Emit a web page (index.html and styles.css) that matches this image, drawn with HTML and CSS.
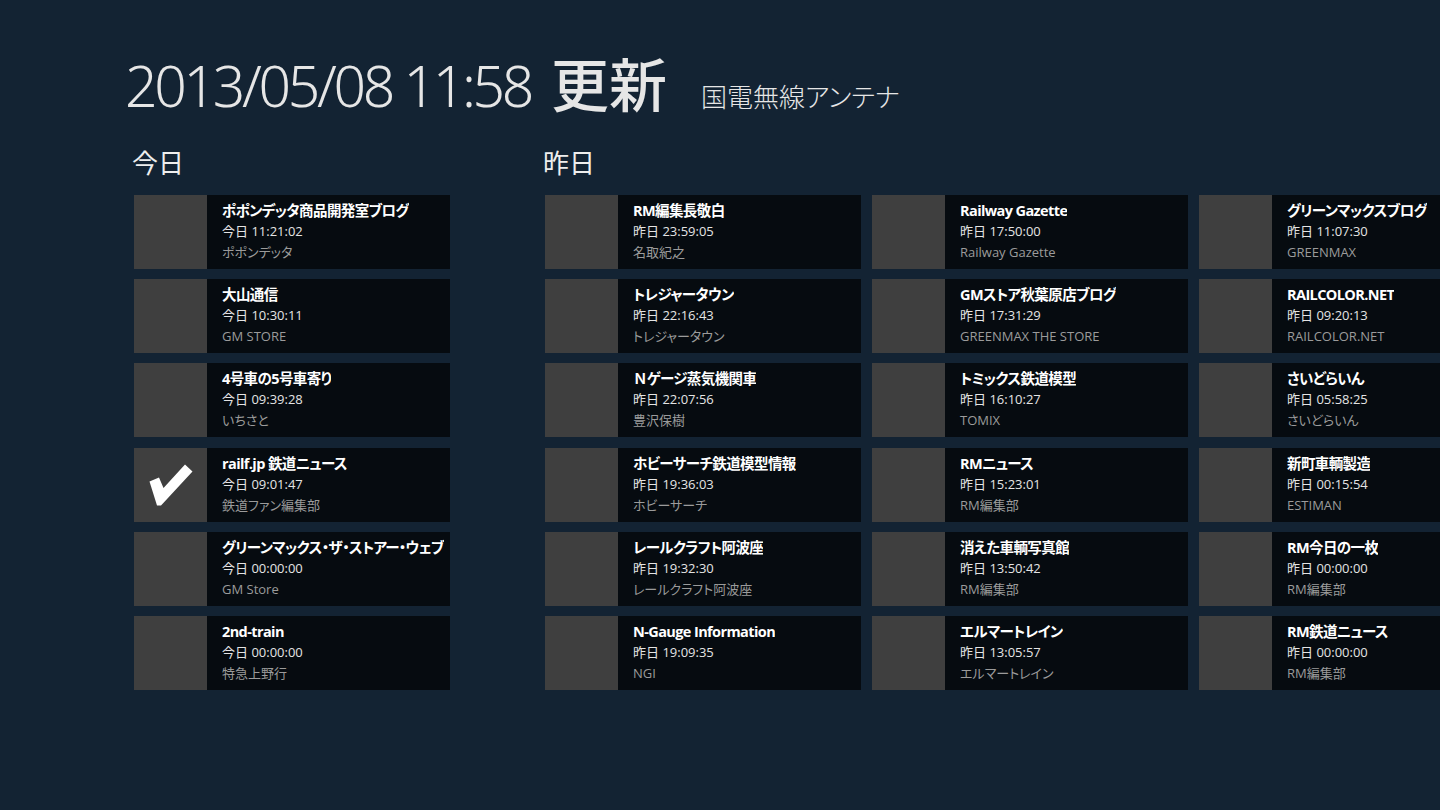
FILE: index.html
```html
<!DOCTYPE html>
<html lang="ja">
<head>
<meta charset="UTF-8">
<meta name="viewport" content="width=device-width, initial-scale=1.0">
<title>国電無線アンテナ</title>
<link rel="stylesheet" href="styles.css">
</head>
<body>
<div class="page">
    <header class="page-header">
        <span class="stamp">2013/05/08 11:58</span>
        <span class="updated">更新</span>
        <span class="app-name">国電無線アンテナ</span>
    </header>

    <div class="groups">
        <!-- 今日 -->
        <section class="group">
            <h2 class="group-title">今日</h2>
            <div class="tiles tiles-1">
                <div class="tile">
                    <div class="thumb"></div>
                    <div class="info">
                        <div class="name">ポポンデッタ商品開発室ブログ</div>
                        <div class="time">今日 11:21:02</div>
                        <div class="source">ポポンデッタ</div>
                    </div>
                </div>
                <div class="tile">
                    <div class="thumb"></div>
                    <div class="info">
                        <div class="name">大山通信</div>
                        <div class="time">今日 10:30:11</div>
                        <div class="source">GM STORE</div>
                    </div>
                </div>
                <div class="tile">
                    <div class="thumb"></div>
                    <div class="info">
                        <div class="name">4号車の5号車寄り</div>
                        <div class="time">今日 09:39:28</div>
                        <div class="source">いちさと</div>
                    </div>
                </div>
                <div class="tile">
                    <div class="thumb">
                        <svg class="check" width="73" height="74" viewBox="0 0 73 74">
                            <polygon points="15.5,33.5 25,29.5 29.5,40 51,16.5 58.5,23.5 27,57.5 23,57.5" fill="#fff"/>
                        </svg>
                    </div>
                    <div class="info">
                        <div class="name">railf.jp 鉄道ニュース</div>
                        <div class="time">今日 09:01:47</div>
                        <div class="source">鉄道ファン編集部</div>
                    </div>
                </div>
                <div class="tile">
                    <div class="thumb"></div>
                    <div class="info">
                        <div class="name">グリーンマックス・ザ・ストアー・ウェブ</div>
                        <div class="time">今日 00:00:00</div>
                        <div class="source">GM Store</div>
                    </div>
                </div>
                <div class="tile">
                    <div class="thumb"></div>
                    <div class="info">
                        <div class="name">2nd-train</div>
                        <div class="time">今日 00:00:00</div>
                        <div class="source">特急上野行</div>
                    </div>
                </div>
            </div>
        </section>

        <!-- 昨日 -->
        <section class="group">
            <h2 class="group-title">昨日</h2>
            <div class="tiles tiles-3">
                <div class="tile">
                    <div class="thumb"></div>
                    <div class="info">
                        <div class="name">RM編集長敬白</div>
                        <div class="time">昨日 23:59:05</div>
                        <div class="source">名取紀之</div>
                    </div>
                </div>
                <div class="tile">
                    <div class="thumb"></div>
                    <div class="info">
                        <div class="name">トレジャータウン</div>
                        <div class="time">昨日 22:16:43</div>
                        <div class="source">トレジャータウン</div>
                    </div>
                </div>
                <div class="tile">
                    <div class="thumb"></div>
                    <div class="info">
                        <div class="name"><span class="wide">Ｎ</span>ゲージ蒸気機関車</div>
                        <div class="time">昨日 22:07:56</div>
                        <div class="source">豊沢保樹</div>
                    </div>
                </div>
                <div class="tile">
                    <div class="thumb"></div>
                    <div class="info">
                        <div class="name">ホビーサーチ鉄道模型情報</div>
                        <div class="time">昨日 19:36:03</div>
                        <div class="source">ホビーサーチ</div>
                    </div>
                </div>
                <div class="tile">
                    <div class="thumb"></div>
                    <div class="info">
                        <div class="name">レールクラフト阿波座</div>
                        <div class="time">昨日 19:32:30</div>
                        <div class="source">レールクラフト阿波座</div>
                    </div>
                </div>
                <div class="tile">
                    <div class="thumb"></div>
                    <div class="info">
                        <div class="name">N-Gauge Information</div>
                        <div class="time">昨日 19:09:35</div>
                        <div class="source">NGI</div>
                    </div>
                </div>

                <div class="tile">
                    <div class="thumb"></div>
                    <div class="info">
                        <div class="name">Railway Gazette</div>
                        <div class="time">昨日 17:50:00</div>
                        <div class="source">Railway Gazette</div>
                    </div>
                </div>
                <div class="tile">
                    <div class="thumb"></div>
                    <div class="info">
                        <div class="name">GMストア秋葉原店ブログ</div>
                        <div class="time">昨日 17:31:29</div>
                        <div class="source">GREENMAX THE STORE</div>
                    </div>
                </div>
                <div class="tile">
                    <div class="thumb"></div>
                    <div class="info">
                        <div class="name">トミックス鉄道模型</div>
                        <div class="time">昨日 16:10:27</div>
                        <div class="source">TOMIX</div>
                    </div>
                </div>
                <div class="tile">
                    <div class="thumb"></div>
                    <div class="info">
                        <div class="name">RMニュース</div>
                        <div class="time">昨日 15:23:01</div>
                        <div class="source">RM編集部</div>
                    </div>
                </div>
                <div class="tile">
                    <div class="thumb"></div>
                    <div class="info">
                        <div class="name">消えた車輌写真館</div>
                        <div class="time">昨日 13:50:42</div>
                        <div class="source">RM編集部</div>
                    </div>
                </div>
                <div class="tile">
                    <div class="thumb"></div>
                    <div class="info">
                        <div class="name">エルマートレイン</div>
                        <div class="time">昨日 13:05:57</div>
                        <div class="source">エルマートレイン</div>
                    </div>
                </div>

                <div class="tile">
                    <div class="thumb"></div>
                    <div class="info">
                        <div class="name">グリーンマックスブログ</div>
                        <div class="time">昨日 11:07:30</div>
                        <div class="source">GREENMAX</div>
                    </div>
                </div>
                <div class="tile">
                    <div class="thumb"></div>
                    <div class="info">
                        <div class="name">RAILCOLOR.NET</div>
                        <div class="time">昨日 09:20:13</div>
                        <div class="source">RAILCOLOR.NET</div>
                    </div>
                </div>
                <div class="tile">
                    <div class="thumb"></div>
                    <div class="info">
                        <div class="name">さいどらいん</div>
                        <div class="time">昨日 05:58:25</div>
                        <div class="source">さいどらいん</div>
                    </div>
                </div>
                <div class="tile">
                    <div class="thumb"></div>
                    <div class="info">
                        <div class="name">新町車輌製造</div>
                        <div class="time">昨日 00:15:54</div>
                        <div class="source">ESTIMAN</div>
                    </div>
                </div>
                <div class="tile">
                    <div class="thumb"></div>
                    <div class="info">
                        <div class="name">RM今日の一枚</div>
                        <div class="time">昨日 00:00:00</div>
                        <div class="source">RM編集部</div>
                    </div>
                </div>
                <div class="tile">
                    <div class="thumb"></div>
                    <div class="info">
                        <div class="name">RM鉄道ニュース</div>
                        <div class="time">昨日 00:00:00</div>
                        <div class="source">RM編集部</div>
                    </div>
                </div>
            </div>
        </section>
    </div>
</div>
</body>
</html>
```

FILE: styles.css
```css
html, body {
    margin: 0;
    padding: 0;
}

body {
    background-color: #132333;
    color: #fff;
    font-family: "Open Sans", "Noto Sans CJK JP", sans-serif;
    font-feature-settings: "palt";
    width: 1440px;
    height: 810px;
    overflow: hidden;
}

.page {
    padding: 40px 0 0 125px;
}

.page-header {
    display: flex;
    align-items: baseline;
    height: 80px;
    color: #e6e6e6;
}

.stamp {
    font-family: "Noto Sans", "Noto Sans CJK JP", sans-serif;
    font-weight: 300;
    font-size: 57px;
    letter-spacing: -3.3px;
}

.updated {
    font-family: "Noto Sans CJK JP", sans-serif;
    font-weight: 500;
    font-size: 58px;
    margin-left: 20px;
}

.app-name {
    font-family: "Noto Sans CJK JP", sans-serif;
    font-weight: 300;
    font-size: 26px;
    margin-left: 34px;
}

.groups {
    display: flex;
    gap: 95px;
    margin-top: 24px;
    padding-left: 9px;
}

.group-title {
    font-family: "Noto Sans CJK JP", sans-serif;
    font-weight: 400;
    font-size: 26px;
    line-height: 36px;
    margin: 0 0 15px -2px;
    color: #eee;
}

.tiles {
    display: grid;
    grid-auto-flow: column;
    grid-template-rows: repeat(6, 74px);
    row-gap: 10.2px;
    column-gap: 11px;
}

.tiles-1 {
    grid-template-columns: 316px;
}

.tiles-3 {
    grid-template-columns: repeat(3, 316px);
}

.tile {
    display: flex;
    background-color: #060b10;
}

.thumb {
    width: 73px;
    height: 74px;
    flex-shrink: 0;
    background-color: #3f3f3f;
}

.check {
    display: block;
}

.info {
    padding: 5px 0 0 15px;
    white-space: nowrap;
    overflow: hidden;
}

.name {
    font-size: 14.5px;
    font-weight: 700;
    line-height: 21px;
    letter-spacing: -0.6px;
}

.wide {
    font-feature-settings: normal;
}

.time {
    font-size: 13px;
    line-height: 21px;
    color: #e4e4e4;
}

.source {
    font-size: 13px;
    line-height: 21px;
    color: #9b9b9b;
}
```
